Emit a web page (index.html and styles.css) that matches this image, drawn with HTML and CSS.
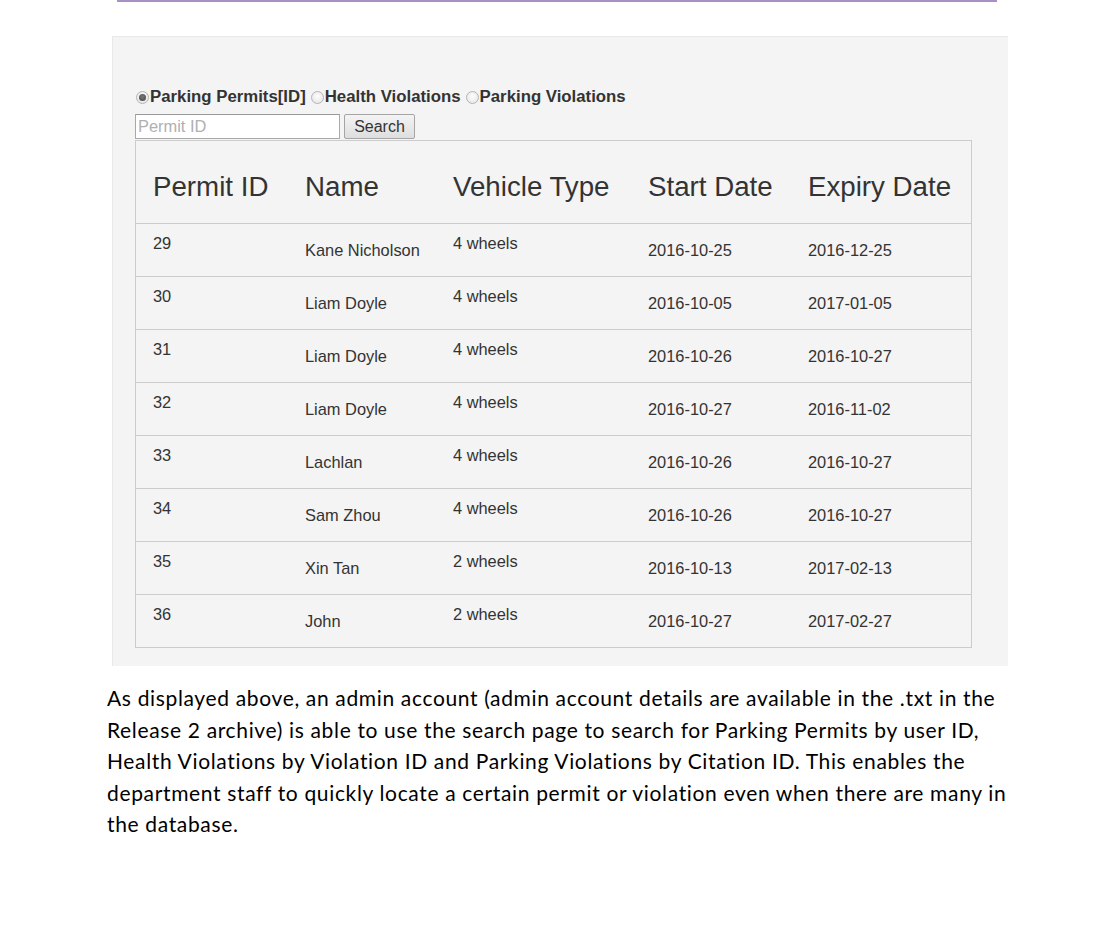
FILE: index.html
```html
<!DOCTYPE html>
<html>
<head>
<meta charset="utf-8">
<link rel="stylesheet" href="styles.css">
</head>
<body>
<div class="topline"></div>
<div class="panel">
  <div class="radios">
    <label class="opt"><span class="radio checked"></span>Parking Permits[ID]</label>
    <label class="opt"><span class="radio"></span>Health Violations</label>
    <label class="opt"><span class="radio"></span>Parking Violations</label>
  </div>
  <div class="searchrow">
    <input class="field" type="text" placeholder="Permit ID">
    <button class="btn">Search</button>
  </div>
  <table class="grid">
    <colgroup>
      <col class="c1"><col class="c2"><col class="c3"><col class="c4"><col class="c5">
    </colgroup>
    <thead>
      <tr><th>Permit ID</th><th>Name</th><th>Vehicle Type</th><th>Start Date</th><th>Expiry Date</th></tr>
    </thead>
    <tbody>
      <tr><td class="top">29</td><td>Kane Nicholson</td><td class="top">4 wheels</td><td>2016-10-25</td><td>2016-12-25</td></tr>
      <tr><td class="top">30</td><td>Liam Doyle</td><td class="top">4 wheels</td><td>2016-10-05</td><td>2017-01-05</td></tr>
      <tr><td class="top">31</td><td>Liam Doyle</td><td class="top">4 wheels</td><td>2016-10-26</td><td>2016-10-27</td></tr>
      <tr><td class="top">32</td><td>Liam Doyle</td><td class="top">4 wheels</td><td>2016-10-27</td><td>2016-11-02</td></tr>
      <tr><td class="top">33</td><td>Lachlan</td><td class="top">4 wheels</td><td>2016-10-26</td><td>2016-10-27</td></tr>
      <tr><td class="top">34</td><td>Sam Zhou</td><td class="top">4 wheels</td><td>2016-10-26</td><td>2016-10-27</td></tr>
      <tr><td class="top">35</td><td>Xin Tan</td><td class="top">2 wheels</td><td>2016-10-13</td><td>2017-02-13</td></tr>
      <tr><td class="top">36</td><td>John</td><td class="top">2 wheels</td><td>2016-10-27</td><td>2017-02-27</td></tr>
    </tbody>
  </table>
</div>
<p class="desc">As displayed above, an admin account (admin account details are available in the .txt in the<br>Release 2 archive) is able to use the search page to search for Parking Permits by user ID,<br>Health Violations by Violation ID and Parking Violations by Citation ID. This enables the<br>department staff to quickly locate a certain permit or violation even when there are many in<br>the database.</p>
</body>
</html>
```

FILE: styles.css
```css
html, body {
  margin: 0;
  padding: 0;
  background: #ffffff;
}

body {
  width: 1112px;
  height: 952px;
  overflow: hidden;
  font-family: "Liberation Sans", Arial, sans-serif;
}

.topline {
  margin-left: 117px;
  width: 880px;
  height: 2px;
  background: #a890c4;
}

.panel {
  margin-top: 34px;
  margin-left: 112px;
  width: 873px;
  padding: 50px 0 18px 22px;
  background: #f4f4f4;
  border-top: 1px solid #e9e9e9;
  border-left: 1px solid #e9e9e9;
}

.radios {
  display: flex;
  align-items: center;
  height: 20px;
  margin-bottom: 7px;
  font-size: 16.8px;
  font-weight: bold;
  color: #333333;
}

.opt {
  display: flex;
  align-items: center;
  margin-right: 4px;
}

.radio {
  box-sizing: border-box;
  width: 13px;
  height: 13px;
  margin: 0 1px 0 1px;
  border-radius: 50%;
  border: 1px solid #b4b4b4;
  background: radial-gradient(circle at 50% 40%, #fdfdfd 0%, #e2e2e2 100%);
  position: relative;
}

.radio.checked::after {
  content: "";
  position: absolute;
  left: 2px;
  top: 2px;
  width: 7px;
  height: 7px;
  border-radius: 50%;
  background: radial-gradient(circle at 50% 40%, #777 0%, #444 100%);
}

.searchrow {
  display: flex;
  height: 26px;
}

.field {
  box-sizing: border-box;
  width: 205px;
  height: 25px;
  margin: 0;
  padding: 0 2px;
  border: 1px solid #a9a9a9;
  border-top-color: #9a9a9a;
  background: #ffffff;
  font-family: "Liberation Sans", Arial, sans-serif;
  font-size: 16.4px;
  color: #333;
  outline: none;
}

.field::placeholder {
  color: #b0b0b0;
}

.btn {
  box-sizing: border-box;
  width: 71px;
  height: 25px;
  margin: 0 0 0 4px;
  padding: 0;
  border: 1px solid #a5a5a5;
  border-radius: 2px;
  background: linear-gradient(#f4f4f4, #dedede);
  font-family: "Liberation Sans", Arial, sans-serif;
  font-size: 16px;
  color: #333333;
}

.grid {
  box-sizing: border-box;
  width: 837px;
  table-layout: fixed;
  border-collapse: separate;
  border-spacing: 0;
  border: 1px solid #cccccc;
  color: #333333;
}

.c1 { width: 152px; }
.c2 { width: 148px; }
.c3 { width: 195px; }
.c4 { width: 160px; }
.c5 { width: 180px; }

.grid th {
  height: 82px;
  box-sizing: border-box;
  padding: 29px 0 20px 17px;
  text-align: left;
  font-weight: normal;
  font-size: 27.7px;
  line-height: 33px;
  vertical-align: top;
  white-space: nowrap;
}

.grid td {
  height: 53px;
  box-sizing: border-box;
  padding: 0 0 0 17px;
  border-top: 1px solid #cccccc;
  font-size: 16.4px;
  line-height: 20px;
  vertical-align: middle;
  white-space: nowrap;
}

.grid td.top {
  vertical-align: top;
  padding-top: 9px;
}

.desc {
  margin: 16px 0 0 107px;
  font-family: "Lato", "Open Sans", sans-serif;
  font-size: 21px;
  letter-spacing: 0.65px;
  line-height: 31.5px;
  color: #000000;
  white-space: nowrap;
}
```
